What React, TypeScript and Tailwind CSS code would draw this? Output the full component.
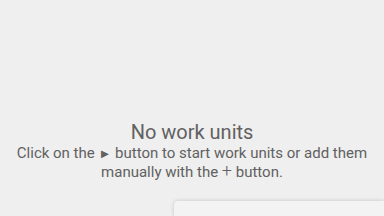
import React from "react";

const EmptyState = () => (
  <div className="flex flex-col items-center text-center text-[#616161]">
    <h2 className="text-[20px] leading-[24px] font-normal">No work units</h2>
    <p className="mt-[1px] text-[15px] leading-[17px]">
      Click on the <span className="text-[13px]">►</span> button to start work units or add them
      <br />
      manually with the <span className="text-[18px] leading-[17px] font-light">+</span> button.
    </p>
  </div>
);

const App: React.FC = () => {
  return (
    <div
      className="w-[384px] h-[216px] overflow-hidden bg-[#efefef] flex flex-col"
      style={{ fontFamily: "Roboto, 'Noto Sans', sans-serif" }}
    >
      <div className="pt-[120px]">
        <EmptyState />
      </div>
      <div className="flex-1 flex justify-end items-end">
        <div className="w-[210px] h-[15px] bg-[#f3f3f3] rounded-tl-[4px] shadow-[0_0_4px_rgba(0,0,0,0.18)]" />
      </div>
    </div>
  );
};

export default App;
